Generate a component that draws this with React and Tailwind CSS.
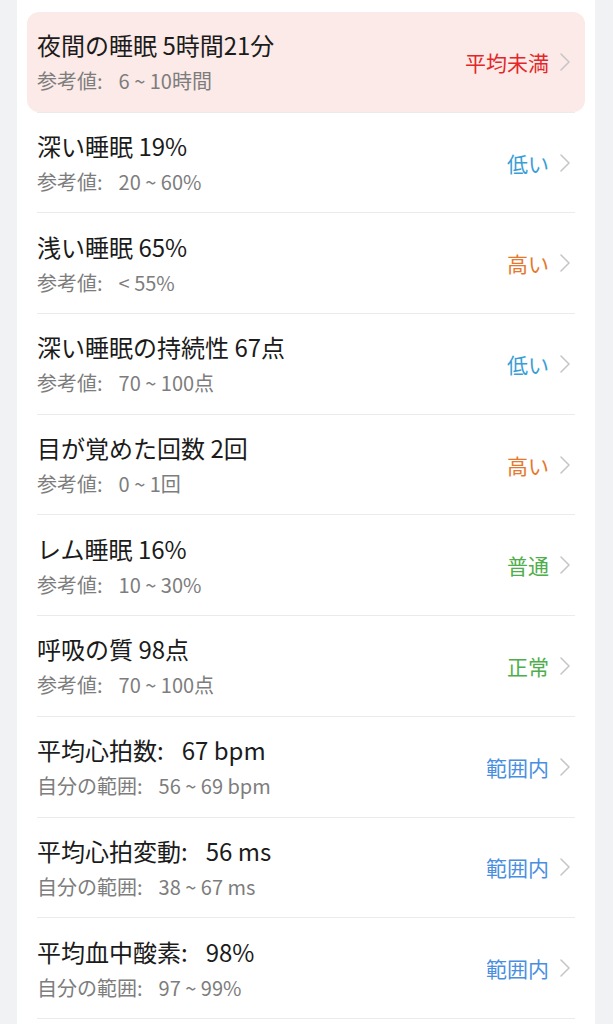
const rows = [
  { title: '夜間の睡眠 5時間21分', label: '参考値', val: '6 ~ 10時間', status: '平均未満', color: 'text-[#e4262a]', hl: true },
  { title: '深い睡眠 19%', label: '参考値', val: '20 ~ 60%', status: '低い', color: 'text-[#3a9ed6]' },
  { title: '浅い睡眠 65%', label: '参考値', val: '< 55%', status: '高い', color: 'text-[#e5782c]' },
  { title: '深い睡眠の持続性 67点', label: '参考値', val: '70 ~ 100点', status: '低い', color: 'text-[#3a9ed6]' },
  { title: '目が覚めた回数 2回', label: '参考値', val: '0 ~ 1回', status: '高い', color: 'text-[#e5782c]' },
  { title: 'レム睡眠 16%', label: '参考値', val: '10 ~ 30%', status: '普通', color: 'text-[#4fae4c]' },
  { title: '呼吸の質 98点', label: '参考値', val: '70 ~ 100点', status: '正常', color: 'text-[#4fae4c]' },
  { title: '平均心拍数', value: '67 bpm', label: '自分の範囲', val: '56 ~ 69 bpm', status: '範囲内', color: 'text-[#4a8fdf]' },
  { title: '平均心拍変動', value: '56 ms', label: '自分の範囲', val: '38 ~ 67 ms', status: '範囲内', color: 'text-[#4a8fdf]' },
  { title: '平均血中酸素', value: '98%', label: '自分の範囲', val: '97 ~ 99%', status: '範囲内', color: 'text-[#4a8fdf]' },
];

function Chevron() {
  return (
    <svg width="12" height="20" viewBox="0 0 12 20" fill="none" className="ml-[10px] mr-[4px] shrink-0">
      <path d="M2 2 L10 10 L2 18" stroke="#c6c6c6" strokeWidth="1.6" strokeLinecap="round" strokeLinejoin="round" />
    </svg>
  );
}

export default function App() {
  return (
    <div className="min-h-screen bg-[#f1f2f4] px-[17px] pr-[18px]" style={{ fontFamily: '"Noto Sans CJK JP", "Noto Sans", sans-serif' }}>
      <div className="bg-white pt-[12px] min-h-screen">
        {rows.map((r, i) => (
          <div key={i}>
            <div className="px-[10px]">
              <div className={`h-[99.7px] px-[10px] flex items-center ${r.hl ? 'bg-[#fbeae7] rounded-[12px]' : ''}`}>
                <div className="flex-1 flex flex-col gap-[8px] pt-[1px]">
                  <div className="text-[24px] leading-[30px] text-[#1b1b1b]">
                    {r.value ? (
                      <>
                        {r.title}:<span className="ml-[18px]">{r.value}</span>
                      </>
                    ) : (
                      r.title
                    )}
                  </div>
                  <div className="text-[20px] leading-[26px] text-[#7d7d7d]">
                    {r.label}:<span className="ml-[16px]">{r.val}</span>
                  </div>
                </div>
                <div className={`text-[21px] leading-[26px] ${r.color}`}>{r.status}</div>
                <Chevron />
              </div>
            </div>
            <div className="mx-[20px] h-px bg-[#ebebeb]" />
          </div>
        ))}
      </div>
    </div>
  );
}
